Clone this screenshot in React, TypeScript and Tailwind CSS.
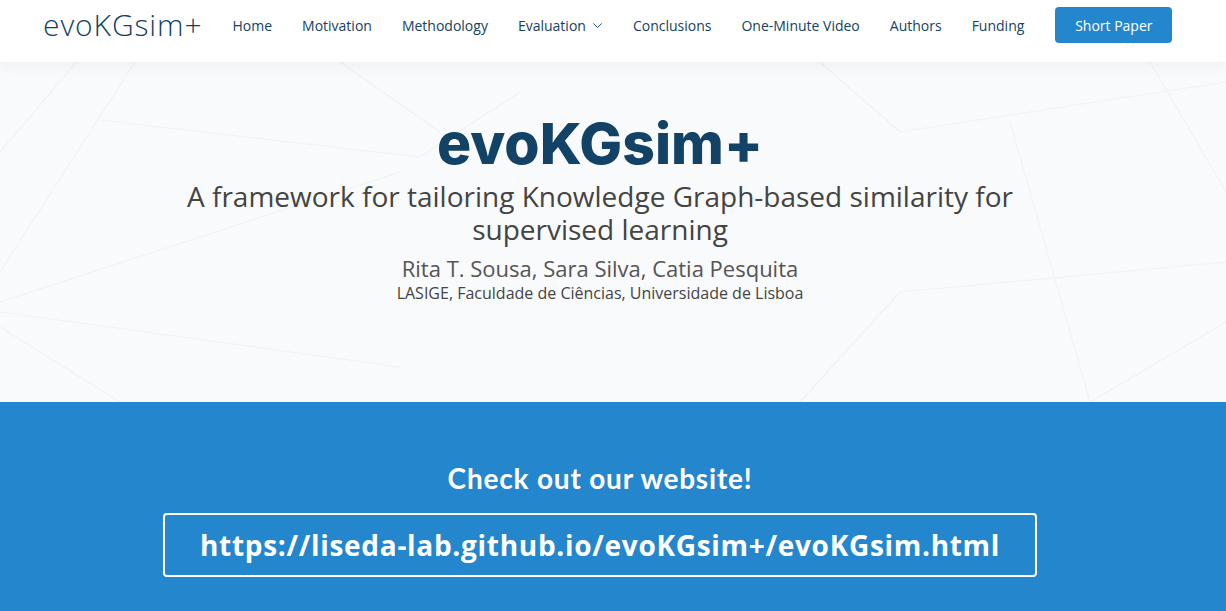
import React from "react";

const navLinks = ["Home", "Motivation", "Methodology", "Evaluation", "Conclusions", "One-Minute Video", "Authors", "Funding"];

function HeroLines() {
  // faint polygon pattern behind the hero
  return (
    <svg className="pointer-events-none absolute inset-0 h-full w-full" viewBox="0 0 1226 340" preserveAspectRatio="none">
      <g stroke="#f1f2f4" strokeWidth="1.2" fill="none">
        <line x1="0" y1="90" x2="85" y2="-10" />
        <line x1="0" y1="210" x2="135" y2="0" />
        <line x1="100" y1="58" x2="420" y2="95" />
        <line x1="0" y1="240" x2="400" y2="110" />
        <line x1="0" y1="250" x2="400" y2="305" />
        <line x1="0" y1="265" x2="120" y2="340" />
        <line x1="340" y1="0" x2="440" y2="70" />
        <line x1="420" y1="95" x2="520" y2="30" />
        <line x1="820" y1="0" x2="900" y2="70" />
        <line x1="900" y1="70" x2="1226" y2="20" />
        <line x1="1010" y1="60" x2="1090" y2="340" />
        <line x1="900" y1="230" x2="1226" y2="200" />
        <line x1="1090" y1="340" x2="1226" y2="260" />
        <line x1="800" y1="340" x2="900" y2="230" />
        <line x1="1226" y1="130" x2="1150" y2="0" />
      </g>
    </svg>
  );
}

export default function App() {
  return (
    <div className="flex min-h-screen w-full flex-col bg-[#2487ce]" style={{ fontFamily: '"Open Sans", sans-serif' }}>
      <header className="relative z-10 flex h-[62px] items-center bg-white pb-[12px] pl-[43px] shadow-[0_2px_15px_rgba(0,0,0,0.06)]">
        <div className="mr-[30px] text-[30px] font-light leading-none tracking-[0.9px] text-[#124265]">
          evoKGsim+
        </div>
        <nav className="flex items-center gap-[30px] text-[14px] text-[#124265]">
          {navLinks.map((l) => (
            <span key={l} className="flex items-center">
              {l}
              {l === "Evaluation" && (
                <svg className="ml-[6px]" width="11" height="11" viewBox="0 0 16 16" fill="none" stroke="#124265" strokeWidth="1.4">
                  <path d="M2 5l6 6 6-6" />
                </svg>
              )}
            </span>
          ))}
        </nav>
        <button className="ml-[31px] h-[36px] w-[117px] rounded-[4px] bg-[#2487ce] text-[14px] font-medium text-white">
          Short Paper
        </button>
      </header>

      <section className="relative flex h-[340px] flex-col items-center overflow-hidden bg-[#f9fafb] pt-[50px] pr-[26px] text-center">
        <HeroLines />
        <h1 className="relative text-[57px] font-extrabold leading-[64px] text-[#124265]" style={{ fontFamily: "Inter, sans-serif" }}>
          evoKGsim+
        </h1>
        <h2 className="relative mt-[4px] max-w-[860px] text-[28px] leading-[33px] text-[#444444]">
          A framework for tailoring Knowledge Graph-based similarity for supervised learning
        </h2>
        <p className="relative mt-[8px] text-[22px] leading-[28px] text-[#555555]">
          Rita T. Sousa, Sara Silva, Catia Pesquita
        </p>
        <p className="relative text-[16px] leading-[22px] text-[#444444]">LASIGE, Faculdade de Ciências, Universidade de Lisboa</p>
      </section>

      <section className="flex flex-col items-center pt-[58px] pr-[26px] pb-[34px] text-white">
        <h3 className="text-[28px] font-bold leading-[36px] tracking-[0.8px]" style={{ fontFamily: "Lato, sans-serif" }}>
          Check out our website!
        </h3>
        <div className="mt-[17px] flex h-[64px] w-[874px] items-center justify-center rounded-[4px] border-2 border-white text-[28px] font-bold tracking-[0.7px]">
          https://liseda-lab.github.io/evoKGsim+/evoKGsim.html
        </div>
      </section>
    </div>
  );
}
